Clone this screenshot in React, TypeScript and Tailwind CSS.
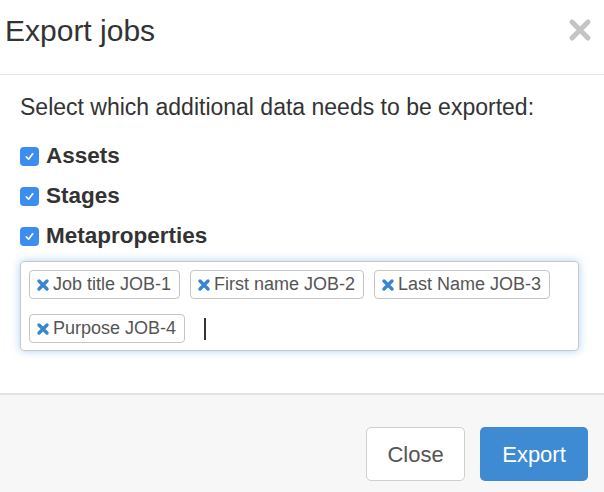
import React from "react";

function Check() {
  return (
    <span className="flex h-[19px] w-[19px] items-center justify-center rounded-[4px] bg-[#3b8ef0]">
      <svg width="11" height="11" viewBox="0 0 12 12">
        <path d="M2.5 6.5 L5 9 L9.5 3" fill="none" stroke="white" strokeWidth="1.8" strokeLinecap="round" strokeLinejoin="round" />
      </svg>
    </span>
  );
}

function Tag({ label }: { label: string }) {
  return (
    <span className="flex h-[29px] items-center gap-[3px] rounded-[4px] border border-[#c4c4c4] bg-white pl-[6px] pr-[8px] text-[18px] text-[#555]">
      <svg width="14" height="14" viewBox="0 0 14 14">
        <path d="M3 3 L11 11 M11 3 L3 11" stroke="#3a85d0" strokeWidth="3.4" strokeLinecap="round" />
      </svg>
      <span>{label}</span>
    </span>
  );
}

export default function App() {
  return (
    <div className="flex h-[492px] w-[604px] flex-col overflow-hidden bg-white font-['Liberation_Sans',Arial,sans-serif] text-[#333]">
      <div className="flex h-[75px] shrink-0 items-start justify-between border-b border-[#e5e5e5] pl-[5px] pr-[11px] pt-[14px]">
        <h1 className="text-[30px] leading-[34px] text-[#333]">Export jobs</h1>
        <svg className="mt-[3px]" width="26" height="26" viewBox="0 0 26 26">
          <path d="M5 5 L21 21 M21 5 L5 21" stroke="#c4c4c4" strokeWidth="5" strokeLinecap="round" />
        </svg>
      </div>
      <div className="flex flex-1 flex-col px-[20px] pt-[19px]">
        <p className="text-[23px] leading-[26px] text-[#333]">Select which additional data needs to be exported:</p>
        <div className="mt-[25px] flex flex-col gap-[18px]">
          {["Assets", "Stages", "Metaproperties"].map((l) => (
            <label key={l} className="flex h-[22px] items-center gap-[7px] text-[22.5px] font-bold text-[#333]">
              <Check />
              <span>{l}</span>
            </label>
          ))}
        </div>
        <div className="mt-[14px] flex h-[90px] w-[559px] flex-wrap content-start gap-x-[10px] gap-y-[15px] rounded-[4px] border border-[#c8c8c8] px-[8px] pt-[8px] shadow-[0_0_8px_rgba(102,175,233,0.55)]">
          <Tag label="Job title JOB-1" />
          <Tag label="First name JOB-2" />
          <Tag label="Last Name JOB-3" />
          <Tag label="Purpose JOB-4" />
          <span className="ml-[9px] mt-[4px] h-[22px] w-[1.5px] bg-[#333]" />
        </div>
      </div>
      <div className="flex h-[99px] shrink-0 items-start justify-end gap-[15px] border-t-2 border-[#e3e3e3] bg-[#f7f7f7] pr-[16px] pt-[32px]">
        <button className="h-[54px] w-[99px] rounded-[5px] border border-[#cfcfcf] bg-white text-[22px] text-[#555]">Close</button>
        <button className="h-[54px] w-[108px] rounded-[5px] bg-[#3e8ad3] text-[22px] text-white">Export</button>
      </div>
    </div>
  );
}
